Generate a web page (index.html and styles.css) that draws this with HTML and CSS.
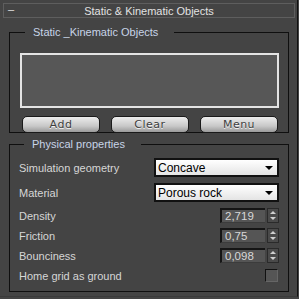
FILE: index.html
```html
<!DOCTYPE html>
<html lang="en">
<head>
<meta charset="UTF-8" />
<title>Static &amp; Kinematic Objects</title>
<link rel="stylesheet" href="styles.css">
</head>
<body>

<div class="rollout">
  <div class="titlebar">
    <span class="collapse">&ndash;</span>
    <span class="title">Static &amp; Kinematic Objects</span>
  </div>

  <!-- object list -->
  <div class="group objects">
    <span class="group-title">Static _Kinematic Objects</span>
    <div class="listbox"></div>
    <div class="buttons">
      <button>Add</button>
      <button>Clear</button>
      <button>Menu</button>
    </div>
  </div>

  <!-- physical properties -->
  <div class="group physics">
    <span class="group-title">Physical properties</span>
    <div class="row drop-row">
      <span class="label">Simulation geometry</span>
      <div class="dropdown"><span>Concave</span><span class="arrow"></span></div>
    </div>
    <div class="row drop-row">
      <span class="label">Material</span>
      <div class="dropdown"><span>Porous rock</span><span class="arrow"></span></div>
    </div>
    <div class="row spin-row">
      <span class="label">Density</span>
      <div class="spinner"><span class="value">2,719</span><span class="arrows"><i class="up"></i><i class="down"></i></span></div>
    </div>
    <div class="row spin-row">
      <span class="label">Friction</span>
      <div class="spinner"><span class="value">0,75</span><span class="arrows"><i class="up"></i><i class="down"></i></span></div>
    </div>
    <div class="row spin-row">
      <span class="label">Bounciness</span>
      <div class="spinner"><span class="value">0,098</span><span class="arrows"><i class="up"></i><i class="down"></i></span></div>
    </div>
    <div class="row check-row">
      <span class="label">Home grid as ground</span>
      <span class="checkbox"></span>
    </div>
  </div>
</div>

</body>
</html>
```

FILE: styles.css
```css
html, body {
  margin: 0;
  padding: 0;
  background: #444444;
}
body {
  font-family: "Liberation Sans", Arial, sans-serif;
  font-size: 11px;
  color: #d6d6d6;
}
.rollout {
  width: 298px;
  height: 297px;
  border-right: 1px solid #111;
  border-bottom: 1px solid #3a3a3a;
  padding-top: 3px;
  box-sizing: border-box;
}
.titlebar {
  margin: 0 2px 0 3px;
  height: 13px;
  border: 1px solid #5e5e5e;
  display: flex;
  align-items: center;
  position: relative;
}
.collapse {
  position: absolute;
  left: 4px;
  top: -1px;
  color: #e0e0e0;
}
.title {
  flex: 1;
  text-align: center;
  color: #e2e2e2;
}
.group {
  box-sizing: border-box;
  width: 280px;
  margin-left: 9px;
  border: 1px solid #0f0f0f;
  padding: 0 9px 0 9px;
}
.group-title {
  display: inline-block;
  height: 14px;
  line-height: 14px;
  margin: -8px 0 0 5px;
  padding: 0 16px 0 8px;
  background: #444444;
  color: #c8d4e8;
  vertical-align: top;
}
.objects {
  margin-top: 14px;
  height: 101px;
  padding-left: 10px;
}
.listbox {
  height: 51px;
  margin-top: 8px;
  background: #575757;
  border: 2px solid #e4e4e4;
}
.buttons {
  display: flex;
  justify-content: space-between;
  margin-top: 8px;
  padding: 0 1px 0 2px;
}
.buttons button {
  width: 78px;
  height: 17px;
  padding: 0;
  border: 1px solid #1a1a1a;
  border-radius: 5px;
  background: linear-gradient(#ececec, #c8c8c8 60%, #9a9a9a);
  color: #3e3e3e;
  font-family: "DejaVu Sans", sans-serif;
  font-size: 11px;
  letter-spacing: 0.5px;
  text-shadow: 0 1px 0 #f4f4f4;
}
.physics {
  margin-top: 11px;
  height: 148px;
}
.physics .group-title {
  margin-bottom: 7px;
}
.row {
  display: flex;
  align-items: center;
  justify-content: space-between;
}
.label {
  color: #d6d6d6;
}
.drop-row {
  height: 19px;
  margin-bottom: 6px;
}
.dropdown {
  box-sizing: border-box;
  width: 125px;
  height: 19px;
  border: 2px solid #111;
  background: linear-gradient(#ffffff, #e4e4e4);
  display: flex;
  align-items: center;
  justify-content: space-between;
  padding: 0 4px 0 2px;
  color: #000;
  font-size: 12px;
}
.arrow {
  width: 0;
  height: 0;
  border-left: 4px solid transparent;
  border-right: 4px solid transparent;
  border-top: 4px solid #000;
}
.spin-row {
  height: 15px;
  margin-bottom: 5px;
}
.spinner {
  display: flex;
  align-items: stretch;
  height: 15px;
}
.value {
  width: 40px;
  background: #555555;
  border-top: 2px solid #151515;
  border-left: 2px solid #151515;
  border-bottom: 1px solid #3c3c3c;
  padding-left: 3px;
  color: #d8d8d8;
  line-height: 13px;
  font-size: 11.5px;
}
.arrows {
  width: 10px;
  margin-left: 2px;
  border: 1px solid #2a2a2a;
  background: #4a4a4a;
  display: flex;
  flex-direction: column;
  align-items: center;
  justify-content: space-around;
}
.arrows i {
  width: 0;
  height: 0;
  border-left: 3px solid transparent;
  border-right: 3px solid transparent;
}
.arrows .up {
  border-bottom: 3px solid #cfcfcf;
}
.arrows .down {
  border-top: 3px solid #cfcfcf;
}
.check-row {
  height: 15px;
  padding-right: 1px;
}
.checkbox {
  width: 11px;
  height: 11px;
  border: 1px solid #111;
  border-right-color: #666;
  border-bottom-color: #666;
  background: #555;
}
```
